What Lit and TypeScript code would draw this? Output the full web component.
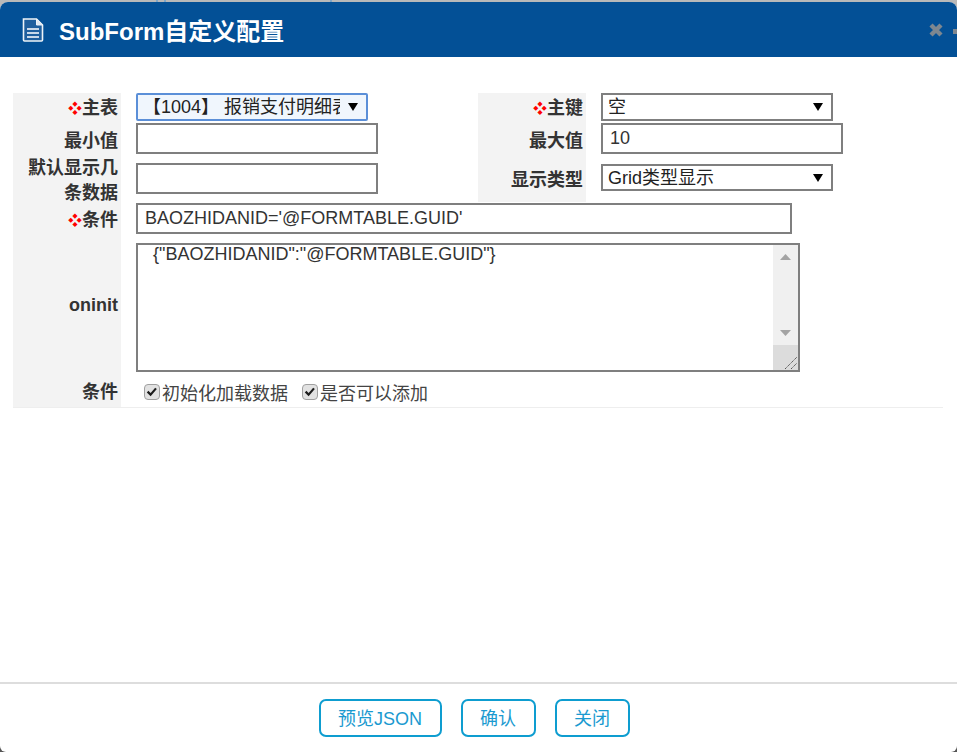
import { LitElement, html, css, svg } from "lit";
import { customElement } from "lit/decorators.js";

const check = svg`<path d="M3.6 7.6 6.6 10.6 12 4.4" fill="none" stroke="#1c1c1c" stroke-width="2.2"/>`;

@customElement("app-root")
export class AppRoot extends LitElement {
  static styles = css`
    :host {
      display: block;
      width: 957px;
      height: 752px;
      background:
        linear-gradient(90deg, transparent 156px, #7fa6c6 156px, #7fa6c6 158px, transparent 158px, transparent 164px, #7fa6c6 164px, #7fa6c6 166px, transparent 166px, transparent 330px, #7fa6c6 330px, #7fa6c6 332px, transparent 332px) 0 0 / 100% 2px no-repeat,
        linear-gradient(#b9b9b9 0 50%, #555 50%);
      font-family: "Liberation Sans", "Noto Sans CJK SC", sans-serif;
      overflow: hidden;
    }
    .dialog {
      box-sizing: border-box;
      height: 750px;
      margin-top: 2px;
      background: #fff;
      border-radius: 8px 8px 6px 6px;
      overflow: hidden;
      display: flex;
      flex-direction: column;
    }
    .head {
      height: 55px;
      flex: none;
      background: #035096;
      display: flex;
      align-items: center;
      color: #fff;
      padding: 0 0 0 22px;
    }
    .head h1 {
      margin: 0 0 0 15px;
      font-size: 24px;
      font-weight: 700;
      flex: 1;
    }
    .close { width: 16px; height: 16px; }
    .sliver { width: 4px; height: 5px; margin: 3px 0 0 9px; background: #7e8790; }
    .body { flex: 1; padding: 36px 14px 0 13px; }
    .form {
      display: grid;
      grid-template-columns: 108px 357px 108px 1fr;
      grid-template-rows: 30px 32px 48px 40px 135px 29px;
      border-bottom: 1px solid #eee;
    }
    .label {
      background: #f3f3f3;
      color: #333;
      font-size: 18px;
      font-weight: 700;
      line-height: 25px;
      text-align: right;
      padding-right: 3px;
      display: flex;
      align-items: center;
      justify-content: flex-end;
    }
    .label i { color: #f00; font-style: normal; font-size: 14px; }
    .label.low { padding-top: 4px; }
    .label.two { padding-top: 3px; }
    .label.type { padding-top: 3px; margin-bottom: 1px; }
    .label.up { padding-bottom: 6px; }
    .label.oninit { padding-bottom: 11px; }
    .field { padding-left: 15px; display: flex; align-items: flex-start; }
    .full { grid-column: 2 / 5; }
    input.text, select, textarea {
      box-sizing: border-box;
      font: 18px "Liberation Sans", "Noto Sans CJK SC", sans-serif;
      color: #333;
      border: 2px solid #7f7f7f;
      background: #fff;
      margin: 0;
      border-radius: 0;
      outline: none;
    }
    input.text { width: 242px; height: 31px; padding: 0 7px; }
    input.cond { width: 656px; }
    input.mid { margin-top: 8px; }
    .sel { position: relative; display: block; width: 232px; height: 28px; }
    .sel::after {
      content: "";
      position: absolute;
      right: 10px;
      top: 10px;
      border-left: 5px solid transparent;
      border-right: 5px solid transparent;
      border-top: 8px solid #000;
      pointer-events: none;
    }
    .sel.low { height: 27px; margin-top: 9px; }
    select {
      appearance: none;
      display: block;
      width: 100%;
      height: 100%;
      padding: 0 26px 0 5px;
      color: #222;
    }
    select.focus { border-color: #5b8fd8; background: #f0f6fd; border-radius: 2px; }
    .area { position: relative; width: 664px; height: 129px; }
    textarea {
      display: block;
      width: 100%;
      height: 100%;
      padding: 0 40px 0 15px;
      line-height: 19px;
      overflow: hidden;
      resize: none;
    }
    .scroll {
      position: absolute;
      top: 2px;
      right: 2px;
      bottom: 2px;
      width: 25px;
      display: flex;
      flex-direction: column;
      align-items: center;
      background: #f0f0f0;
    }
    .scroll .up { margin-top: 9px; flex: none; }
    .scroll .down { margin: auto 0 9px; flex: none; }
    .scroll .grip { flex: none; display: block; }
    .checks { align-items: center; font-size: 18px; color: #444; padding: 0 0 1px 23px; gap: 14px; }
    .checks label { display: flex; align-items: center; gap: 2px; }
    .checks svg { width: 16px; height: 16px; flex: none; }
    .foot {
      flex: none;
      box-sizing: border-box;
      height: 70px;
      border-top: 2px solid #ddd;
      display: flex;
      align-items: flex-start;
      justify-content: center;
      gap: 19px;
      padding: 15px 8px 0 0;
    }
    .foot button {
      box-sizing: border-box;
      height: 38px;
      padding: 0 18px 2px 17px;
      font: 18px "Liberation Sans", "Noto Sans CJK SC", sans-serif;
      color: #1a9ad0;
      background: #fff;
      border: 2px solid #0e9dd0;
      border-radius: 7px;
    }
  `;

  private box() {
    return html`<svg viewBox="0 0 16 16"><rect x="0.5" y="0.5" width="15" height="15" rx="3.5" fill="#e2e2e2" stroke="#a0a0a0"/>${check}</svg>`;
  }

  render() {
    return html`
      <div class="dialog">
        <header class="head">
          <svg width="22" height="24" viewBox="0 0 22 24">
            <path d="M1.5 1h13l6 6v15a1 1 0 0 1-1 1h-17a1 1 0 0 1-1-1z" fill="#1f5f9e" stroke="#eef3f8" stroke-width="1.6"/>
            <path d="M14.5 1v6h6z" fill="#dfe8f2" stroke="#eef3f8"/>
            <path d="M5 11h12M5 15h12M5 19h12" stroke="#c9d8e8" stroke-width="2"/>
          </svg>
          <h1>SubForm自定义配置</h1>
          <svg class="close" viewBox="0 0 16 16"><path d="M3 3l10 10M13 3L3 13" stroke="#7e8790" stroke-width="4.4"/></svg>
          <span class="sliver"></span>
        </header>
        <main class="body">
          <div class="form">
            <div class="label"><i>❖</i>主表</div>
            <div class="field"><span class="sel"><select class="focus"><option>【1004】 报销支付明细表</option></select></span></div>
            <div class="label"><i>❖</i>主键</div>
            <div class="field"><span class="sel"><select><option>空</option></select></span></div>

            <div class="label low">最小值</div>
            <div class="field"><input class="text" /></div>
            <div class="label low">最大值</div>
            <div class="field"><input class="text" value="10" /></div>

            <div class="label two">默认显示几<br />条数据</div>
            <div class="field"><input class="text mid" /></div>
            <div class="label type">显示类型</div>
            <div class="field"><span class="sel low"><select><option>Grid类型显示</option></select></span></div>

            <div class="label up"><i>❖</i>条件</div>
            <div class="field full"><input class="text cond" value="BAOZHIDANID='@FORMTABLE.GUID'" /></div>

            <div class="label oninit">oninit</div>
            <div class="field full">
              <div class="area">
                <textarea .value=${'{"BAOZHIDANID":"@FORMTABLE.GUID"}'}></textarea>
                <div class="scroll">
                  <svg class="up" width="11" height="6" viewBox="0 0 11 6"><path d="M5.5 0 11 6H0z" fill="#a3a3a3"/></svg>
                  <svg class="down" width="11" height="6" viewBox="0 0 11 6"><path d="M0 0H11L5.5 6z" fill="#a3a3a3"/></svg>
                  <svg class="grip" width="25" height="25" viewBox="0 0 25 25">
                    <rect width="25" height="25" fill="#dcdcdc"/>
                    <path d="M12 24 24 12M18 24 24 18" stroke="#555" stroke-dasharray="1.4 .6"/>
                  </svg>
                </div>
              </div>
            </div>

            <div class="label">条件</div>
            <div class="field full checks">
              <label>${this.box()}初始化加载数据</label>
              <label>${this.box()}是否可以添加</label>
            </div>
          </div>
        </main>
        <footer class="foot">
          <button>预览JSON</button>
          <button>确认</button>
          <button>关闭</button>
        </footer>
      </div>
    `;
  }
}
